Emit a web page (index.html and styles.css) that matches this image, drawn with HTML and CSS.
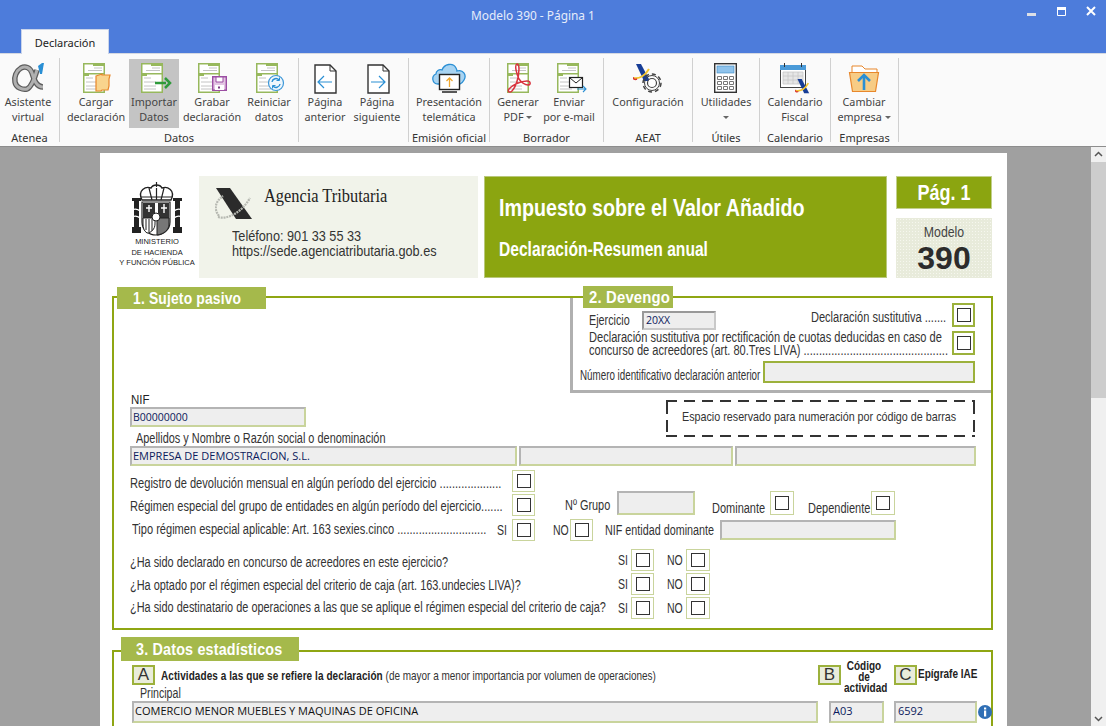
FILE: index.html
```html
<!DOCTYPE html>
<html lang="es">
<head>
<meta charset="utf-8">
<title>Modelo 390 - Página 1</title>
<link rel="stylesheet" href="styles.css">
</head>
<body>
<svg class="defs" aria-hidden="true">
  <symbol id="doc" viewBox="0 0 22 30">
    <rect x=".75" y=".75" width="20.5" height="28.5" fill="#fff" stroke="#97b85c" stroke-width="1.5"/>
    <path d="M10 1h11v2H10zM1 10h21v1.5H1zM1 11h5v2H1z" fill="#97b85c"/>
    <path d="M11 5h8M5 7.500h14M3 15h7M3 19h12M3 23h12M3 26h12" stroke="#c4c4c4" stroke-width="1" fill="none"/>
  </symbol>
  <symbol id="sheet" viewBox="0 0 23 30">
    <path d="M1 1h15l6 6v22H1z" fill="#fff" stroke="#333" stroke-width="1.400"/>
    <path d="M16 1v6h6" fill="none" stroke="#333"/>
  </symbol>
  <symbol id="aeat" viewBox="0 0 18 18">
    <path d="M3 0h5l9 17h-6z" fill="#173d96"/>
    <path d="M1 14c5 1 11-2 15-9" fill="none" stroke="#f4c430" stroke-width="2"/>
    <path d="M0 13c0 2 2 3 4 2" fill="none" stroke="#d8322a" stroke-width="1.500"/>
  </symbol>
</svg>

<div class="app">
  <header class="titlebar">
    <div class="title">Modelo 390 - Página 1</div>
    <div class="win">
      <svg class="win-min" width="9" height="3"><rect width="9" height="3" fill="#dcdfe6"/></svg>
      <svg class="win-max" width="9" height="9"><path d="M.5 2.500h8v6h-8z" fill="none" stroke="#fff"/><rect width="9" height="3" fill="#fff"/></svg>
      <svg class="win-close" width="10" height="10"><path d="M1 1l8 8M9 1L1 9" stroke="#fff" stroke-width="2"/></svg>
    </div>
    <div class="tab">Declaración</div>
  </header>

  <nav class="ribbon">
    <section class="group g-atenea">
      <div class="btns">
        <div class="btn w56">
          <svg class="ico" viewBox="0 0 40 36"><path d="M35 28C28 28 26 20 24 14 22 8 17 7 13 9 8 12 6 18 7 23 8 29 15 31 19 30 24 28 27 18 29 11" fill="none" stroke="#5c5c5c" stroke-width="5.500"/><path d="M35 28C28 28 26 20 24 14 22 8 17 7 13 9 8 12 6 18 7 23 8 29 15 31 19 30 24 28 27 18 29 11" fill="none" stroke="#b0b0b0" stroke-width="3"/><path d="M30 7l4-3h2l-2 11h-2z" fill="#2a8fd4"/></svg>
          <span>Asistente<br>virtual</span>
        </div>
      </div>
      <div class="glabel">Atenea</div>
    </section>

    <section class="group g-datos">
      <div class="btns">
        <div class="btn w66">
          <svg class="ico" viewBox="0 0 40 36"><use href="#doc" x="7" y="4" width="22" height="30"/><path d="M20 17l6-2v1h8l-1 4v7l-1 4h-6l-1 1h-5z" fill="#f9d48d" stroke="#e8872b" stroke-width="1.200"/></svg>
          <span>Cargar<br>declaración</span>
        </div>
        <div class="btn w50 active">
          <svg class="ico" viewBox="0 0 40 36"><use href="#doc" x="7" y="4" width="22" height="30"/><path d="M21 24h11" stroke="#2f9a3b" stroke-width="2.500"/><path d="M31 19l5 5-5 5" fill="none" stroke="#2f9a3b" stroke-width="2.500"/></svg>
          <span>Importar<br>Datos</span>
        </div>
        <div class="btn w66">
          <svg class="ico" viewBox="0 0 40 36"><use href="#doc" x="6" y="4" width="22" height="30"/><path d="M20.700 17.700h13.600v13.600H20.700z" fill="#e3c6e3" stroke="#9c4ea3" stroke-width="1.400"/><path d="M24 18h7v5h-7z" fill="#fff" stroke="#9c4ea3"/><path d="M23 26h9v5h-9z" fill="#fff"/><rect x="26" y="27.500" width="2" height="2" fill="#7b3a82"/></svg>
          <span>Grabar<br>declaración</span>
        </div>
        <div class="btn w48">
          <svg class="ico" viewBox="0 0 40 36"><use href="#doc" x="7" y="4" width="22" height="30"/><circle cx="27" cy="24" r="7.500" fill="#eef6fc" stroke="#3f98d8" stroke-width="1.200"/><path d="M23 23a4 4 0 0 1 7-2M31 25a4 4 0 0 1-7 2" fill="none" stroke="#2a8fd4" stroke-width="1.400"/><path d="M30.500 18.500v3h-3M23.500 29.500v-3h3" fill="none" stroke="#2a8fd4"/></svg>
          <span>Reiniciar<br>datos</span>
        </div>
      </div>
      <div class="glabel">Datos</div>
    </section>

    <section class="group g-pages">
      <div class="btns">
        <div class="btn w52">
          <svg class="ico" viewBox="0 0 40 36"><use href="#sheet" x="9" y="5" width="23" height="30"/><path d="M27 23H14M19 17l-6 6 6 6" fill="none" stroke="#2a8fd4" stroke-width="1.200"/></svg>
          <span>Página<br>anterior</span>
        </div>
        <div class="btn w52">
          <svg class="ico" viewBox="0 0 40 36"><use href="#sheet" x="10" y="5" width="23" height="30"/><path d="M14 23h14M22 17l6 6-6 6" fill="none" stroke="#2a8fd4" stroke-width="1.200"/></svg>
          <span>Página<br>siguiente</span>
        </div>
      </div>
      <div class="glabel"></div>
    </section>

    <section class="group g-emision">
      <div class="btns">
        <div class="btn w80">
          <svg class="ico" viewBox="0 0 40 36"><path d="M9 25c-6 0-7-8-2-10 0-3 3-5 6-4 2-6 11-8 14-2 1 2 1 3 1 3 6-2 10 4 7 9-1 2-2 3-4 4z" fill="#a8d4f2" stroke="#2a8fd4" stroke-width="1.300"/><rect x="10.500" y="15.500" width="20" height="15" fill="#fff" stroke="#222" stroke-width="1.400"/><path d="M13 33h15" stroke="#222" stroke-width="1.500"/><path d="M20.500 28V19M17.500 22l3-3 3 3" fill="none" stroke="#f0a830" stroke-width="1.300"/></svg>
          <span>Presentación<br>telemática</span>
        </div>
      </div>
      <div class="glabel">Emisión oficial</div>
    </section>

    <section class="group g-borrador">
      <div class="btns">
        <div class="btn w56">
          <svg class="ico" viewBox="0 0 40 36"><use href="#doc" x="9" y="4" width="22" height="30"/><path d="M19 5c-3 1 0 11 2 15 2 3 6 6 9 6 3 0 3-4-1-4-6 0-15 4-18 8-2 3 1 4 3 2 3-3 7-12 7-22 0-3-1-5-2-5z" fill="none" stroke="#d9333f" stroke-width="1.500"/></svg>
          <span>Generar<br>PDF <i class="caret"></i></span>
        </div>
        <div class="btn w46">
          <svg class="ico" viewBox="0 0 40 36"><use href="#doc" x="8" y="4" width="22" height="30"/><rect x="20.500" y="18.500" width="13" height="10" fill="#fff" stroke="#222" stroke-width="1.200"/><path d="M21 19l6 5 6-5" fill="none" stroke="#222"/><path d="M28 30h9M34 27l3 3-3 3" fill="none" stroke="#2a8fd4" stroke-width="1.100"/></svg>
          <span>Enviar<br>por e-mail</span>
        </div>
      </div>
      <div class="glabel">Borrador</div>
    </section>

    <section class="group g-aeat">
      <div class="btns">
        <div class="btn w88">
          <svg class="ico" viewBox="0 0 40 36"><use href="#aeat" x="5" y="5" width="18" height="18"/><circle cx="24" cy="24" r="4.500" fill="#fff" stroke="#444" stroke-width="1.200"/><circle cx="24" cy="24" r="9" fill="none" stroke="#444" stroke-width="1.500" stroke-dasharray="4 3"/><circle cx="24" cy="24" r="7.500" fill="none" stroke="#444"/></svg>
          <span>Configuración</span>
        </div>
      </div>
      <div class="glabel">AEAT</div>
    </section>

    <section class="group g-utiles">
      <div class="btns">
        <div class="btn w66">
          <svg class="ico" viewBox="0 0 40 36"><rect x="8.700" y="4.700" width="21.600" height="28.600" fill="#fff" stroke="#333" stroke-width="1.400"/><rect x="11" y="7" width="17" height="7" fill="#8fc3ec" stroke="#3a86c0" stroke-width=".6"/><path d="M11.500 17.500h4v3h-4zM17.500 17.500h4v3h-4zM23.500 17.500h4v3h-4zM11.500 22.500h4v3h-4zM17.500 22.500h4v3h-4zM23.500 22.500h4v3h-4zM11.500 27.500h4v3h-4zM17.500 27.500h4v3h-4zM23.500 27.500h4v3h-4z" fill="#fff" stroke="#777"/></svg>
          <span>Utilidades<br><i class="caret"></i></span>
        </div>
      </div>
      <div class="glabel">Útiles</div>
    </section>

    <section class="group g-calendario">
      <div class="btns">
        <div class="btn w70">
          <svg class="ico" viewBox="0 0 40 36"><rect x="5.500" y="6.500" width="25" height="22" fill="#fff" stroke="#444"/><rect x="5" y="6" width="26" height="5" fill="#4a9ad8"/><path d="M9.500 4v4M26.500 4v4" stroke="#333"/><path d="M8 13h20v12H8zM8 17h20M8 21h20M13 13v12M18 13v12M23 13v12" fill="#e6e6e6" stroke="#c6c6c6" stroke-width=".8"/><use href="#aeat" x="20" y="20" width="15" height="15"/></svg>
          <span>Calendario<br>Fiscal</span>
        </div>
      </div>
      <div class="glabel">Calendario</div>
    </section>

    <section class="group g-empresas">
      <div class="btns">
        <div class="btn w66">
          <svg class="ico" viewBox="0 0 40 36"><path d="M8 12V7h10l3 3h12v5H8z" fill="#fff" stroke="#e8872b"/><path d="M5.500 13.500h29l-3 19h-23z" fill="#f7cc85" stroke="#e8872b" stroke-width="1.200"/><path d="M20 31V17" stroke="#2a8fd4" stroke-width="2.600"/><path d="M14 22l6-6 6 6" fill="none" stroke="#2a8fd4" stroke-width="2.600"/></svg>
          <span>Cambiar<br>empresa <i class="caret"></i></span>
        </div>
      </div>
      <div class="glabel">Empresas</div>
    </section>
  </nav>

  <div class="workspace">
    <main class="viewport">
      <article class="page">
        <header class="head">
          <div class="ministry">
            <svg class="crest" viewBox="0 0 50 54">
              <path d="M10 18C5 8 14 4 19 6c2-4 9-4 11 0 5-2 14 2 9 12z" fill="#fff" stroke="#222" stroke-width="1.400"/>
              <path d="M24.500 0v5M17 6l3 12M32 6l-3 12M24.500 6v12M9 15h31" stroke="#222" stroke-width="1.200"/>
              <path d="M0 16h9v3H0zM41 16h9v3h-9zM2 19h5v26H2zM43 19h5v26h-5zM0 45h9v6H0zM41 45h9v6h-9z" fill="#222"/>
              <path d="M0 28c4-2 8 0 10 3M50 28c-4-2-8 0-10 3M0 35c4-2 8 0 10 3M50 35c-4-2-8 0-10 3" fill="none" stroke="#fff" stroke-width="1.300"/>
              <path d="M10 20h28v20c0 8-7 13-14 13S10 48 10 40z" fill="#fff" stroke="#222" stroke-width="1.200"/>
              <path d="M11 21h12v15H11zM26 21h11v15H26z" fill="#333"/>
              <path d="M11 36h12v6c0 5-4 9-8 9-3-2-4-5-4-9zM14 37v11M17 37v13M20 37v12" fill="#fff" stroke="#222"/>
              <path d="M25 36h12v6c0 6-5 10-12 11z" fill="#777" stroke="#222"/>
              <circle cx="24" cy="35" r="4" fill="#fff" stroke="#222"/>
              <path d="M14 26h6M29 26h6M32 22v9M17 23v7" stroke="#fff" stroke-width="1.400"/>
            </svg>
            <div class="ministry-name">MINISTERIO<br>DE HACIENDA<br>Y FUNCIÓN PÚBLICA</div>
          </div>
          <div class="agency">
            <div class="agency-top">
              <svg class="agency-logo" viewBox="0 0 38 34">
                <path d="M1 1h14l22 31H21z" fill="#2b2b2b"/>
                <path d="M4 29C-2 21 1 14 8 9M3 30c10 3 24-5 32-19" fill="none" stroke="#b7b9b2" stroke-width="2.200" stroke-dasharray="2 .8"/>
              </svg>
              <div class="agency-name">Agencia Tributaria</div>
            </div>
            <div class="agency-contact">Teléfono: 901 33 55 33<br>https://sede.agenciatributaria.gob.es</div>
          </div>
          <div class="banner">
            <h1>Impuesto sobre el Valor Añadido</h1>
            <h2>Declaración-Resumen anual</h2>
          </div>
          <div class="side">
            <div class="pageno"><span>Pág. 1</span></div>
            <div class="model">
              <div class="model-label">Modelo</div>
              <div class="model-num">390</div>
            </div>
          </div>
        </header>

        <section class="box box-one">
          <div class="legend legend-one"><span>1. Sujeto pasivo</span></div>
          <div class="devengo-wrap">
            <div class="devengo">
              <div class="legend legend-two"><span>2. Devengo</span></div>
              <div class="dv-row dv-a">
                <span class="dv-ej">Ejercicio</span>
                <span class="field f-year">20XX</span>
                <span class="dv-sust">Declaración sustitutiva .......</span>
                <span class="cb cb-strong"><i></i></span>
              </div>
              <div class="dv-row dv-b">
                <span class="dv-long">Declaración sustitutiva por rectificación de cuotas deducidas en caso de<br>concurso de acreedores (art. 80.Tres LIVA) ...............................................</span>
                <span class="cb cb-strong"><i></i></span>
              </div>
              <div class="dv-row dv-c">
                <span class="dv-num">Número identificativo declaración anterior</span>
                <span class="field f-prev"></span>
              </div>
            </div>
          </div>

          <div class="nif-row">
            <div>
              <div class="lbl-nif">NIF</div>
              <div class="field f-nif">B00000000</div>
            </div>
            <div class="barcode"><span>Espacio reservado para numeración por código de barras</span></div>
          </div>
          <div class="lbl-name">Apellidos y Nombre o Razón social o denominación</div>
          <div class="name-row">
            <div class="field f-n1">EMPRESA DE DEMOSTRACION, S.L.</div>
            <div class="field f-n2"></div>
            <div class="field f-n3"></div>
          </div>

          <div class="row row-reg">
            <span class="t-main">Registro de devolución mensual en algún período del ejercicio ....................</span>
            <span class="cb"><i></i></span>
          </div>
          <div class="row row-gr">
            <span class="t-main">Régimen especial del grupo de entidades en algún período del ejercicio.......</span>
            <span class="cb"><i></i></span>
            <span class="t-grupo">Nº Grupo</span>
            <span class="field f-grupo"></span>
            <span class="t-dom">Dominante</span>
            <span class="cb cb-w"><i></i></span>
            <span class="t-dep">Dependiente</span>
            <span class="cb cb-w"><i></i></span>
          </div>
          <div class="row row-tipo">
            <span class="t-tipo">Tipo régimen especial aplicable: Art. 163 sexies.cinco .............................</span>
            <span class="t-si">SI</span>
            <span class="cb"><i></i></span>
            <span class="t-no">NO</span>
            <span class="cb"><i></i></span>
            <span class="t-ent">NIF entidad dominante</span>
            <span class="field f-ent"></span>
          </div>

          <div class="questions">
            <div class="q">
              <span class="q-text">¿Ha sido declarado en concurso de acreedores en este ejercicio?</span>
              <span class="q-si">SI</span><span class="cb"><i></i></span>
              <span class="q-no">NO</span><span class="cb cb-w"><i></i></span>
            </div>
            <div class="q">
              <span class="q-text">¿Ha optado por el régimen especial del criterio de caja (art. 163.undecies LIVA)?</span>
              <span class="q-si">SI</span><span class="cb"><i></i></span>
              <span class="q-no">NO</span><span class="cb cb-w"><i></i></span>
            </div>
            <div class="q">
              <span class="q-text">¿Ha sido destinatario de operaciones a las que se aplique el régimen especial del criterio de caja?</span>
              <span class="q-si">SI</span><span class="cb"><i></i></span>
              <span class="q-no">NO</span><span class="cb cb-w"><i></i></span>
            </div>
          </div>
        </section>

        <section class="box box-three">
          <div class="legend legend-three"><span>3. Datos estadísticos</span></div>
          <div class="act-head">
            <span class="letter">A</span>
            <span class="act-title"><b>Actividades a las que se refiere la declaración</b> (de mayor a menor importancia por volumen de operaciones)</span>
            <span class="letter">B</span>
            <span class="act-code">Código<br>de<br>actividad</span>
            <span class="letter letter-c">C</span>
            <span class="act-iae">Epígrafe IAE</span>
          </div>
          <div class="lbl-principal">Principal</div>
          <div class="act-row">
            <div class="field f-act">COMERCIO MENOR MUEBLES Y MAQUINAS DE OFICINA</div>
            <div class="field f-code">A03</div>
            <div class="field f-iae">6592</div>
            <svg class="info" width="14" height="14" viewBox="0 0 14 14"><circle cx="7" cy="7" r="7" fill="#2f6fb5"/><rect x="6" y="2.500" width="2.200" height="2" fill="#fff"/><rect x="6" y="5.500" width="2.200" height="6" fill="#fff"/></svg>
          </div>
        </section>
      </article>
    </main>
    <aside class="scrollbar">
      <svg class="arrow" width="15" height="15"><path d="M4 9l3.500-3.500L11 9" fill="none" stroke="#555" stroke-width="1.500"/></svg>
      <div class="thumb"></div>
      <svg class="arrow arrow-down" width="15" height="15"><path d="M4 6l3.500 3.500L11 6" fill="none" stroke="#555" stroke-width="1.500"/></svg>
    </aside>
  </div>
</div>
</body>
</html>
```
FILE: styles.css
```css
* { box-sizing: border-box; }
html, body { margin: 0; height: 726px; overflow: hidden; }
body { font-family: "Noto Sans", sans-serif; background: #a0a0a0; }
.defs { width: 0; height: 0; display: block; }
.app { display: flex; flex-direction: column; width: 1106px; height: 726px; }

/* Title bar */
.titlebar { height: 54px; flex: none; background: #4d7cdb; position: relative; display: flex; align-items: flex-start; border-bottom: 1px solid #d5d9e2; }
.title { margin: 6px 0 0 471px; font-size: 11.900px; line-height: 18px; color: #e6ecfa; }
.win { margin-left: auto; display: flex; align-items: flex-start; padding: 6px 10px 0 0; }
.win svg { display: block; }
.win-min { margin-top: 7px; }
.win-max { margin: 1px 0 0 21px; }
.win-close { margin-left: 20px; }
.tab { position: absolute; left: 21px; top: 29px; width: 88px; height: 25px; background: #fafafa; border: 1px solid #c9d4ea; border-bottom: 0; font-size: 11px; line-height: 25px; text-align: center; color: #222; }

/* Ribbon */
.ribbon { height: 93px; flex: none; display: flex; align-items: flex-start; background: #fafafa; border-bottom: 1px solid #8d8d8d; padding-top: 4px; }
.group { height: 84px; display: flex; flex-direction: column; border-right: 1px solid #d0d0d0; }
.g-atenea { width: 60px; }
.g-datos { width: 239px; }
.g-pages { width: 110px; }
.g-emision { width: 81px; }
.g-borrador { width: 114px; }
.g-aeat { width: 89px; }
.g-utiles { width: 67px; }
.g-calendario { width: 71px; }
.g-empresas { width: 68px; }
.btns { display: flex; height: 70px; margin-top: 1px; }
.g-datos .btns { padding-left: 3px; }
.btn { height: 69px; display: flex; flex-direction: column; align-items: center; font-size: 10.800px; line-height: 15px; color: #444; text-align: center; white-space: nowrap; }
.btn span { display: block; }
.btn.active { background: #c4c4c4; }
.w46 { width: 46px; } .w48 { width: 48px; } .w50 { width: 50px; } .w52 { width: 52px; }
.w56 { width: 56px; } .w66 { width: 66px; } .w70 { width: 70px; } .w80 { width: 80px; } .w88 { width: 88px; }
.ico { width: 40px; height: 36px; margin-bottom: -1px; flex: none; display: block; }
.caret { display: inline-block; width: 0; height: 0; border: 3px solid transparent; border-top: 3px solid #666; border-bottom: 0; vertical-align: 2px; }
.glabel { font-size: 11px; line-height: 14px; color: #333; text-align: center; margin-top: 3px; white-space: nowrap; }

/* Workspace */
.workspace { flex: 1; display: flex; min-height: 0; }
.viewport { width: 1091px; overflow: hidden; background: #a0a0a0; padding: 6px 0 0 100px; }
.scrollbar { width: 15px; background: #f0f0f0; display: flex; flex-direction: column; }
.arrow { display: block; flex: none; }
.thumb { height: 236px; background: #cdcdcd; }
.arrow-down { margin-top: auto; }
.page { width: 907px; min-height: 600px; background: #fff; padding-top: 23px; font-family: "Liberation Sans", sans-serif; color: #333; }

/* The form's condensed type: Liberation Sans drawn narrow */
.banner h1, .banner h2, .agency-contact, .agency-name, .legend span, .barcode span,
.t-main, .t-grupo, .t-dom, .t-dep, .t-tipo, .t-si, .t-no, .t-ent,
.q-text, .q-si, .q-no, .dv-ej, .dv-long, .dv-num, .lbl-nif, .lbl-name, .lbl-principal,
.act-title, .act-iae { display: block; white-space: nowrap; transform-origin: 0 50%; transform: scaleX(.79); }

/* Form header */
.head { display: flex; height: 102px; margin-left: 20px; }
.ministry { width: 74px; margin-right: 5px; display: flex; flex-direction: column; align-items: center; }
.crest { width: 50px; height: 54px; margin-top: 6px; flex: none; }
.ministry-name { font-size: 7.500px; line-height: 10.500px; text-align: center; color: #222; margin-top: 1px; white-space: nowrap; }
.agency { width: 279px; background: #f1f3ea; padding-top: 11px; }
.agency-top { display: flex; padding-left: 16px; }
.agency-logo { width: 38px; height: 34px; flex: none; }
.agency-name { font-family: "Liberation Serif", serif; font-size: 18px; line-height: 18px; color: #222; margin-left: 11px; transform: scaleX(.91); }
.agency-contact { font-size: 14.500px; line-height: 15px; color: #333; margin: 8px 0 0 33px; transform: scaleX(.875); }
.banner { width: 403px; margin-left: 6px; background: #8ba510; border: 1px solid #b9c87a; color: #fff; padding: 17px 0 0 14px; }
.banner h1 { margin: 0; font-size: 24px; line-height: 28px; font-weight: bold; transform: scaleX(.82); }
.banner h2 { margin: 14px 0 0; font-size: 19.500px; line-height: 26px; font-weight: bold; transform: scaleX(.8); }
.side { width: 96px; margin-left: 9px; display: flex; flex-direction: column; gap: 9px; }
.pageno { height: 33px; background: #8ba510; border: 1px solid #c2cf8c; color: #fff; font-size: 22px; font-weight: bold; line-height: 31px; text-align: center; }
.pageno span { display: block; transform: scaleX(.82); }
.model { flex: 1; background-color: #e8ebdb; background-image: radial-gradient(#f6f7ef 30%, transparent 35%); background-size: 3px 3px; text-align: center; padding-top: 6px; }
.model-label { font-size: 14.500px; line-height: 16px; color: #444; transform: scaleX(.85); }
.model-num { font-size: 32px; font-weight: bold; line-height: 36px; color: #2c2c2c; }

/* Section boxes */
.box { position: relative; margin-left: 12px; width: 881px; border: 2px solid #8fa613; }
.box-one { margin-top: 18px; height: 334px; }
.box-three { margin-top: 20px; height: 200px; border-bottom: 0; }
.legend { position: absolute; background: #a5b94b; color: #fff; font-weight: bold; font-size: 16.500px; line-height: 22px; white-space: nowrap; letter-spacing: .2px; }
.legend-one { left: 3px; top: -11px; width: 149px; height: 22px; padding-left: 16px; }
.legend-one span { transform: scaleX(.84); }
.legend-two { left: 10px; top: -12px; width: 90px; height: 22px; padding-left: 6px; }
.legend-two span { transform: scaleX(.9); }
.legend-three { left: 7px; top: -15px; width: 178px; height: 24px; padding-left: 15px; line-height: 24px; }
.legend-three span { transform: scaleX(.87); }

/* Fields */
.field { display: block; flex: none; background: #eee; border: 2px solid; border-color: #b4b4b4 #c9d49c #c9d49c #b4b4b4; font-family: "Open Sans", sans-serif; font-size: 11px; color: #0b1a5c; line-height: 16px; padding-left: 1px; white-space: nowrap; overflow: hidden; }
.cb { flex: none; display: flex; align-items: center; justify-content: center; width: 23px; height: 22px; border: 1px solid #c9d49c; background: #fff; }
.cb i { display: block; width: 14px; height: 14px; border: 1px solid #333; }
.cb-w { width: 24px; }
.cb-strong { height: 24px; border: 2px solid #9cb13c; }

/* Devengo */
.devengo-wrap { display: flex; justify-content: flex-end; height: 95px; }
.devengo { position: relative; width: 421px; height: 95px; border-left: 3px solid #b0b0b0; border-bottom: 3px solid #b0b0b0; padding: 5px 16px 0 0; font-size: 14px; }
.dv-row { display: flex; }
.dv-a { height: 28px; padding-left: 16px; }
.dv-ej { flex: none; margin-top: 9px; width: 53px; font-size: 14px; line-height: 16px; transform: scaleX(.77); }
.f-year { width: 74px; height: 19px; margin-top: 8px; padding-left: 2px; line-height: 15px; font-size: 10.500px; border-color: #999 #c9c9c9 #c9c9c9 #999; }
.dv-sust { margin: 6px 6px 0 auto; line-height: 16px; white-space: nowrap; transform-origin: 100% 50%; transform: scaleX(.79); }
.dv-b { height: 30px; padding-left: 16px; justify-content: space-between; }
.dv-long { flex: none; width: 357px; line-height: 13px; }
.dv-c { padding-left: 7px; align-items: flex-start; justify-content: space-between; }
.dv-num { flex: none; width: 180px; margin-top: 3px; font-size: 14px; line-height: 22px; transform: scaleX(.7); }
.f-prev { width: 212px; height: 22px; border-color: #9cb13c; }

/* Identification */
.nif-row { display: flex; justify-content: space-between; height: 38px; padding: 0 16px; }
.lbl-nif { font-size: 13.500px; line-height: 14px; color: #222; margin-left: 1px; transform: scaleX(.85); }
.f-nif { width: 176px; height: 20px; font-size: 10.500px; }
.barcode { width: 309px; height: 37px; margin-top: 7px; font-size: 13.500px; line-height: 33px; padding-left: 16px; white-space: nowrap;
  background:
    linear-gradient(90deg, #333 11px, transparent 11px) 0 0 / 18px 2px repeat-x,
    linear-gradient(90deg, #333 11px, transparent 11px) 0 100% / 18px 2px repeat-x,
    linear-gradient(#333 12px, transparent 12px) 0 2px / 2px 18px repeat-y,
    linear-gradient(#333 12px, transparent 12px) 100% 2px / 2px 18px repeat-y; }
.barcode span { transform: scaleX(.796); }
.lbl-name { font-size: 14px; line-height: 15px; margin-left: 22px; transform: scaleX(.78); }
.name-row { display: flex; gap: 2px; padding-left: 16px; height: 20px; }
.f-n1 { width: 387px; height: 20px; }
.f-n2 { width: 214px; height: 20px; }
.f-n3 { width: 241px; height: 20px; }

/* Option rows */
.row { display: flex; align-items: center; height: 22px; padding-left: 16px; font-size: 14px; white-space: nowrap; }
.row-reg { margin-top: 4px; }
.row-gr { margin-top: 2px; }
.row-tipo { margin-top: 3px; }
.t-main { flex: none; width: 382px; }
.row-reg .t-main { margin-top: 4px; transform: scaleX(.794); }
.row-gr .t-main { margin-top: 2px; }
.t-grupo { flex: none; margin-left: 30px; width: 52px; transform: scaleX(.78); }
.f-grupo { width: 78px; height: 24px; margin-top: -4px; }
.t-dom { flex: none; margin: 6px 0 0 17px; width: 58px; transform: scaleX(.785); }
.row-gr .cb-w { height: 24px; margin-top: -4px; }
.t-dep { flex: none; margin: 6px 0 0 14px; width: 63px; transform: scaleX(.785); }
.t-tipo { flex: none; width: 365px; margin: -2px 0 0 2px; }
.t-si { flex: none; width: 15px; transform: scaleX(.75); }
.t-no { flex: none; margin-left: 18px; width: 17px; transform: scaleX(.75); }
.t-ent { flex: none; margin-left: 12px; width: 115px; transform: scaleX(.77); }
.f-ent { width: 176px; height: 20px; }
.questions { margin-top: 8px; display: flex; flex-direction: column; gap: 2px; }
.q { display: flex; align-items: center; height: 22px; padding-left: 16px; font-size: 14px; white-space: nowrap; }
.q-text { flex: none; width: 488px; transform: scaleX(.78); }
.q:nth-child(1) .q-text { margin-top: 4px; }
.q:nth-child(2) .q-text { margin-top: 2px; }
.q:nth-child(3) .q-text { margin-top: -2px; }
.q-si { flex: none; width: 13px; transform: scaleX(.75); }
.q-no { flex: none; margin-left: 13px; width: 19px; transform: scaleX(.75); }

/* Section 3 */
.act-head { display: flex; align-items: flex-start; height: 35px; padding: 13px 0 0 18px; }
.letter { flex: none; width: 23px; height: 20px; background: #e9ecdb; border: 2px solid #9cb13c; font-size: 17px; line-height: 16px; text-align: center; }
.act-title { flex: none; width: 657px; margin: 1px 0 0 6px; font-size: 13.500px; line-height: 20px; transform: scaleX(.738); }
.act-title b { color: #222; letter-spacing: .12px; }
.act-code { flex: none; width: 54px; margin: -5px 0 0 -4px; font-size: 13.500px; font-weight: bold; line-height: 11px; text-align: center; color: #222; white-space: nowrap; transform: scaleX(.74); }
.letter-c { margin-left: 3px; }
.act-iae { margin-left: 1px; font-size: 13.500px; font-weight: bold; line-height: 17px; color: #222; transform: scaleX(.74); }
.lbl-principal { font-size: 14px; line-height: 12px; padding-bottom: 2px; margin-left: 26px; transform: scaleX(.76); }
.act-row { display: flex; align-items: center; padding-left: 18px; }
.f-act { width: 686px; height: 22px; line-height: 16px; color: #111; }
.f-code { width: 55px; height: 22px; line-height: 16px; margin-left: 11px; padding-left: 2px; }
.f-iae { width: 83px; height: 22px; line-height: 16px; margin-left: 10px; padding-left: 2px; }
.info { margin-left: 1px; flex: none; }
```
